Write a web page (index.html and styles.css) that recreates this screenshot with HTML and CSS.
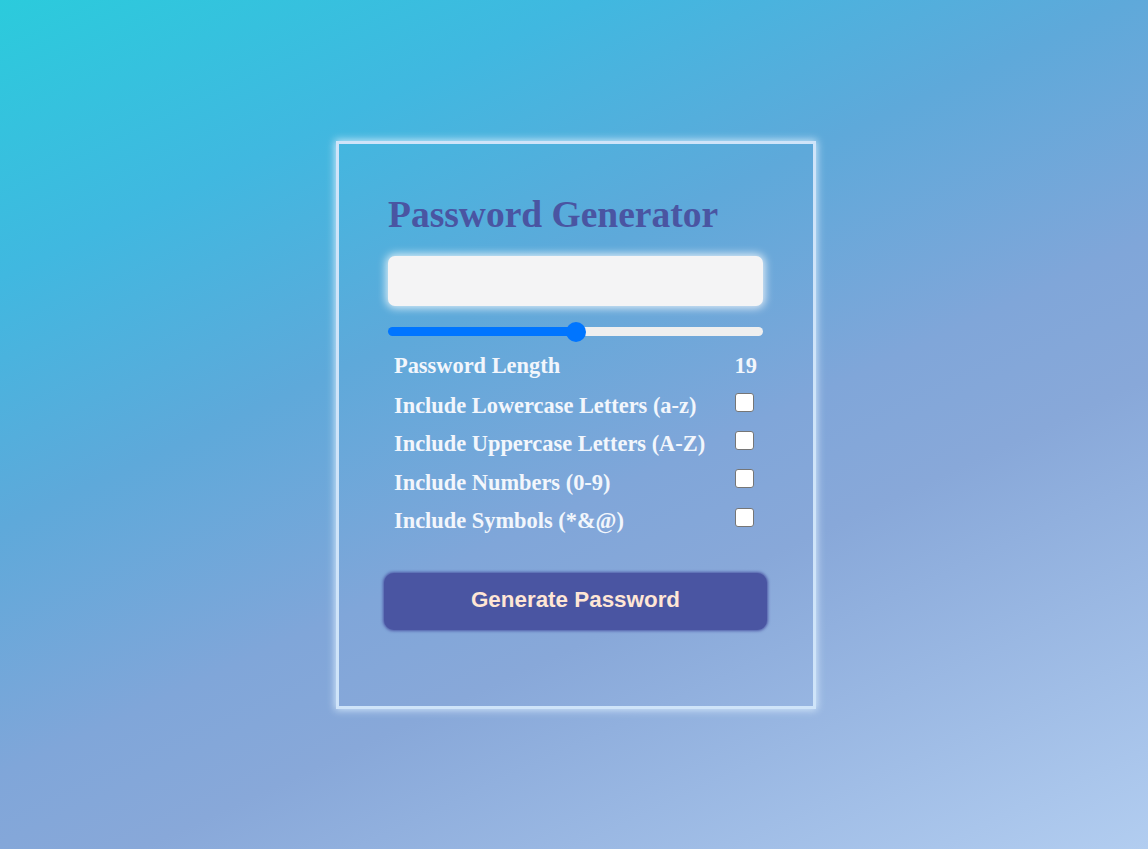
FILE: index.html
```html
<!DOCTYPE html>
<html lang="en">
<head>
<meta charset="utf-8">
<title>Password Generator</title>
<link rel="stylesheet" href="styles.css">
</head>
<body>
  <main class="card">
    <h1 class="title">Password Generator</h1>
    <input class="output" type="text" readonly>
    <input class="slider" type="range" min="8" max="30" value="19">
    <div class="rows">
      <div class="row row-first"><span>Password Length</span><span class="value">19</span></div>
      <label class="row"><span>Include Lowercase Letters (a-z)</span><input class="check" type="checkbox"></label>
      <label class="row"><span>Include Uppercase Letters (A-Z)</span><input class="check" type="checkbox"></label>
      <label class="row"><span>Include Numbers (0-9)</span><input class="check" type="checkbox"></label>
      <label class="row"><span>Include Symbols (*&amp;@)</span><input class="check" type="checkbox"></label>
    </div>
    <button class="generate" type="button">Generate Password</button>
  </main>
</body>
</html>
```

FILE: styles.css
```css
html, body {
  margin: 0;
  height: 100%;
}

body {
  box-sizing: border-box;
  min-height: 100vh;
  padding-left: 4px;
  display: flex;
  align-items: center;
  justify-content: center;
  background: linear-gradient(155deg, #2bcbdc 0%, #40b8e0 20%, #5ea9da 38%, #80a6d9 56%, #88a8d9 66%, #b2cdf0 100%);
  font-family: "Liberation Serif", "Times New Roman", serif;
}

.card {
  box-sizing: border-box;
  width: 480px;
  height: 568px;
  padding: 49px 50px 0 49px;
  border: 3px solid #cfe4f9;
  box-shadow: 0 0 8px 1px rgba(225, 242, 255, 0.85);
  display: flex;
  flex-direction: column;
}

.title {
  margin: 0;
  font-size: 37.5px;
  font-weight: bold;
  line-height: normal;
  color: #4a55a2;
}

.output {
  box-sizing: border-box;
  margin: 20px 0 0;
  width: 375px;
  height: 50px;
  border: none;
  border-radius: 7px;
  background: #f4f4f5;
  box-shadow: 0 0 8px 2px rgba(255, 255, 255, 0.8);
  outline: none;
}

.slider {
  -webkit-appearance: none;
  appearance: none;
  margin: 16px 0 0;
  width: 375px;
  height: 20px;
  background: transparent;
}

.slider::-webkit-slider-runnable-track {
  height: 9px;
  border-radius: 5px;
  background: linear-gradient(to right, #0075ff 50%, #efefef 50%);
}

.slider::-webkit-slider-thumb {
  -webkit-appearance: none;
  appearance: none;
  width: 20px;
  height: 20px;
  margin-top: -5.5px;
  border-radius: 50%;
  background: #0075ff;
  border: none;
}

.rows {
  margin-top: 5px;
  display: flex;
  flex-direction: column;
}

.row {
  height: 38.4px;
  padding: 0 6px;
  display: flex;
  align-items: center;
  justify-content: space-between;
  font-size: 22.4px;
  font-weight: bold;
  color: #f2f6fc;
}

.row-first {
  height: 38.4px;
  padding-bottom: 2px;
}

.check {
  -webkit-appearance: none;
  appearance: none;
  box-sizing: border-box;
  width: 19px;
  height: 19px;
  margin: 0 3px 8px 0;
  border: 1px solid #767676;
  border-radius: 3px;
  background: #ffffff;
}

.generate {
  align-self: center;
  margin-top: 33px;
  width: 383px;
  height: 57px;
  padding: 0 0 3px;
  border: none;
  border-radius: 10px;
  background: #4a55a2;
  box-shadow: 0 0 3px 1px #4e59a6;
  color: #ffe6d5;
  font-family: "Liberation Sans", Arial, sans-serif;
  font-size: 22.4px;
  font-weight: bold;
}
```
